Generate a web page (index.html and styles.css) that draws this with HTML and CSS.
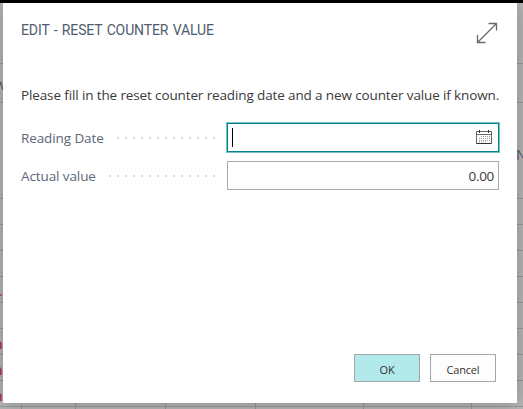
FILE: index.html
```
<!DOCTYPE html>
<html lang="en">
<head>
<meta charset="utf-8">
<title>Reset Counter Value</title>
<link rel="stylesheet" href="styles.css">
</head>
<body>
<div class="page">
  <div class="row row-top"></div>
  <div class="row row-tools"><span class="cut-left">w</span></div>
  <div class="row row-head"><span class="cut-right">N</span></div>
  <div class="row"></div>
  <div class="row"></div>
  <div class="row"></div>
  <div class="row"><span class="dot">.</span></div>
  <div class="row"></div>
  <div class="row"><span class="red">n</span></div>
  <div class="row"><span class="red">n</span></div>
  <div class="row"><span class="red">n</span></div>
  <div class="columns"><i></i><i></i><i></i><i></i><i></i><i></i></div>
</div>
<section class="dialog">
  <header class="header">
    <h1 class="title">EDIT - RESET COUNTER VALUE</h1>
    <svg class="expand" width="22" height="22" viewBox="0 0 22 22"><path d="M1.5 20.5 20.5 1.5M12.5 1.5h8v7M1.5 12.8v7.7h8"/></svg>
  </header>
  <p class="message">Please fill in the reset counter reading date and a new counter value if known.</p>
  <div class="field field-date">
    <span class="label">Reading Date</span><span class="leader leader-date"></span>
    <div class="input input-active">
      <span class="caret"></span>
      <svg class="calendar" width="16" height="15" viewBox="0 0 16 15">
        <path class="cal-frame" d="M.5 1.5h15v12H.5zM.5 4.5h15"/>
        <path class="cal-rings" d="M3.5 0v3M12.5 0v3M.5 13.5h15"/>
        <path class="cal-days" d="M5 6.5h9M3 8.5h11M3 10.5h11M3 12h7"/>
      </svg>
    </div>
  </div>
  <div class="field">
    <span class="label">Actual value</span><span class="leader leader-value"></span>
    <div class="input"><span class="value">0.00</span></div>
  </div>
  <footer class="footer">
    <button class="button primary">OK</button>
    <button class="button">Cancel</button>
  </footer>
</section>
</body>
</html>
```
FILE: styles.css
```
* { box-sizing: border-box; }
body {
  margin: 0;
  width: 523px;
  height: 409px;
  overflow: hidden;
  position: relative;
  background: #b6b6b6;
  font-family: "Open Sans", "Noto Sans", sans-serif;
}
.page {
  height: 409px;
  border-top: 3px solid #000;
  overflow: hidden;
  position: relative;
}
.row {
  height: 26px;
  display: flex;
  align-items: center;
  border-bottom: 1px solid #999;
  overflow: hidden;
  line-height: 20px;
}
.row-top { height: 61px; }
.row-tools { height: 39px; }
.row-head { height: 96px; }
.cut-left { font-size: 14px; color: #555; margin: 3px 0 0 -5px; }
.cut-right { font-size: 14px; color: #56606e; margin: 9px 0 0 516px; }
.dot { font-size: 15px; color: #b04a4a; margin-left: -1px; }
.red { font-size: 15px; font-weight: 700; color: #b8403f; margin: 2px 0 0 -7px; }
.columns {
  position: absolute;
  left: 0;
  bottom: 0;
  height: 6px;
  display: grid;
  grid-template-columns: 22px 54px 90px 90px 108px 108px;
}
.columns i { border-right: 1px solid #959595; }
.dialog {
  position: absolute;
  left: 3px;
  top: 3px;
  width: 514px;
  height: 400px;
  padding: 19px 18px 21px;
  background: #fff;
  box-shadow: 0 0 18px rgba(0, 0, 0, .25);
  clip-path: inset(0 -20px -20px -20px);
  display: flex;
  flex-direction: column;
}
.header { display: flex; justify-content: space-between; height: 62px; }
.title {
  margin: 0;
  font: 400 14px/17px Roboto, sans-serif;
  color: #505c6d;
  letter-spacing: -.12px;
  word-spacing: 1px;
  white-space: nowrap;
}
.expand { margin-right: 1px; }
.expand path { fill: none; stroke: #6a6a6a; stroke-width: 1.3; }
.message {
  margin: 0 0 17px;
  font-size: 13.5px;
  line-height: 22px;
  letter-spacing: -.125px;
  color: #3a3a3a;
  white-space: nowrap;
}
.field {
  display: flex;
  align-items: center;
  width: 478px;
  height: 29px;
}
.field-date { margin-bottom: 9px; }
.label {
  font-size: 13.5px;
  line-height: 20px;
  letter-spacing: -.1px;
  color: #5c6779;
  white-space: nowrap;
}
.leader {
  height: 2px;
  margin: 1px 12px 0 auto;
  background: repeating-linear-gradient(90deg, #dcdcdc 0 2px, transparent 2px 8px);
}
.leader-date { width: 98px; }
.leader-value { width: 106px; }
.input {
  display: flex;
  align-items: center;
  justify-content: flex-end;
  width: 272px;
  height: 29px;
  padding: 0 4px;
  border: 1px solid #a9a9a9;
}
.input-active {
  justify-content: space-between;
  padding: 0 6px 0 4px;
  border-color: #00838a;
  box-shadow: 0 0 0 1px #74c2c4;
}
.caret { width: 1px; height: 19px; background: #000; }
.calendar path { fill: none; stroke: #666; }
.calendar .cal-days { stroke: #999; stroke-dasharray: 1 1; }
.calendar .cal-rings { stroke: #333; }
.value { font-size: 13.5px; line-height: 20px; letter-spacing: -.3px; color: #3a3a3a; }
.footer { display: flex; justify-content: flex-end; gap: 10px; margin-top: auto; margin-right: 3px; }
.button {
  width: 66px;
  height: 28px;
  padding: 3px 0 0;
  border: 1px solid #a6a6a6;
  background: #fdfdfd;
  font: 11px/16px "Open Sans", sans-serif;
  letter-spacing: -.2px;
  color: #333;
}
.primary { background: #b2e9eb; }
```
